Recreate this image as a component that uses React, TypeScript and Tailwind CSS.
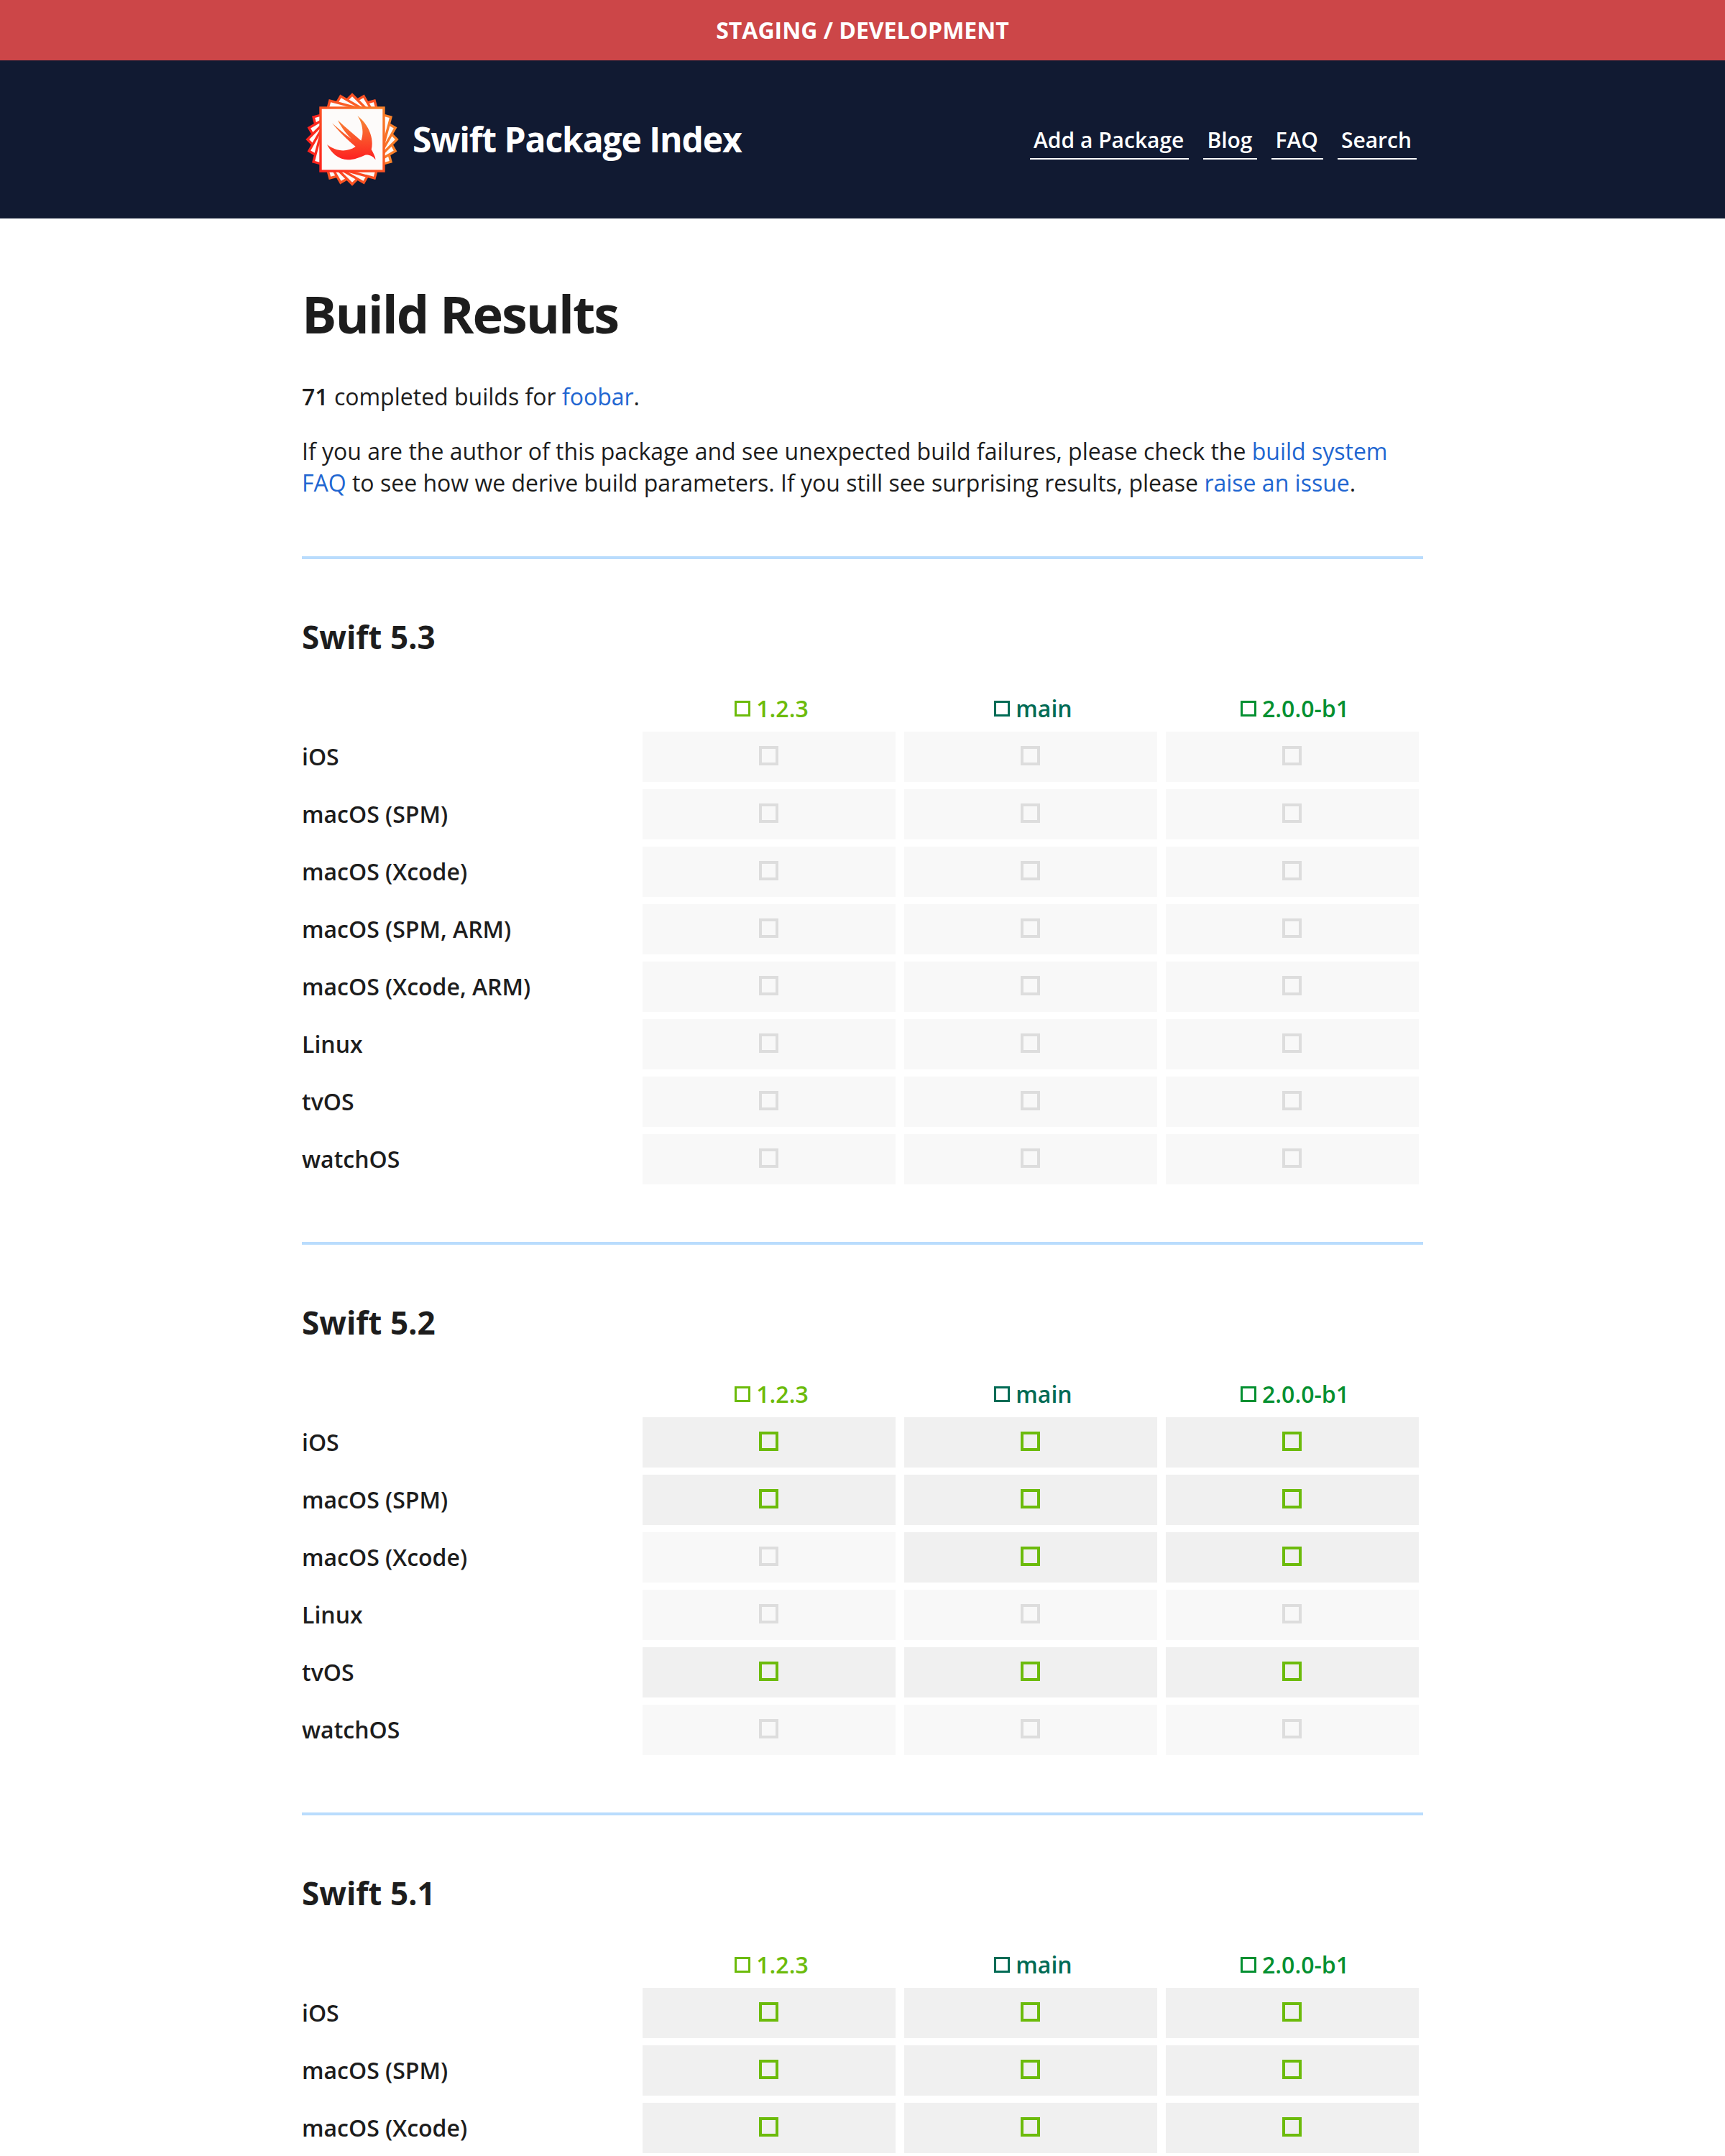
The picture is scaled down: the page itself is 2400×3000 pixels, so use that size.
const FONT = "font-['Open_Sans',sans-serif]"

type Col = { label: string; color: string }

const versions: Col[] = [
  { label: "1.2.3", color: "text-[#6cbb0b]" },
  { label: "main", color: "text-[#006b55]" },
  { label: "2.0.0-b1", color: "text-[#049031]" },
]

type Row = { name: string; on: boolean[] }

const off = [false, false, false]
const all = [true, true, true]

const sections: { title: string; rows: Row[] }[] = [
  {
    title: "Swift 5.3",
    rows: [
      { name: "iOS", on: off },
      { name: "macOS (SPM)", on: off },
      { name: "macOS (Xcode)", on: off },
      { name: "macOS (SPM, ARM)", on: off },
      { name: "macOS (Xcode, ARM)", on: off },
      { name: "Linux", on: off },
      { name: "tvOS", on: off },
      { name: "watchOS", on: off },
    ],
  },
  {
    title: "Swift 5.2",
    rows: [
      { name: "iOS", on: all },
      { name: "macOS (SPM)", on: all },
      { name: "macOS (Xcode)", on: [false, true, true] },
      { name: "Linux", on: off },
      { name: "tvOS", on: all },
      { name: "watchOS", on: off },
    ],
  },
  {
    title: "Swift 5.1",
    rows: [
      { name: "iOS", on: all },
      { name: "macOS (SPM)", on: all },
      { name: "macOS (Xcode)", on: all },
    ],
  },
]

function Logo() {
  const angles = [75, 60, 45, 30, 15, 0]
  return (
    <svg width="130" height="130" viewBox="0 0 130 130" className="ml-[5px] shrink-0">
      <defs>
        <linearGradient id="edge" gradientUnits="userSpaceOnUse" x1="120" y1="15" x2="15" y2="115">
          <stop offset="0" stopColor="#f88a2a" />
          <stop offset="1" stopColor="#fd1d1d" />
        </linearGradient>
        <linearGradient id="bird" x1="0.5" y1="0" x2="0.5" y2="1">
          <stop offset="0" stopColor="#f88a36" />
          <stop offset="1" stopColor="#fd2020" />
        </linearGradient>
      </defs>
      {angles.map((a) => (
        <rect
          key={a}
          x="21"
          y="21"
          width="88"
          height="88"
          fill="#fdfbfa"
          stroke="url(#edge)"
          strokeWidth="3.4"
          transform={`rotate(${a} 65 65)`}
        />
      ))}
      <g transform="translate(-4.3 -8.3) scale(0.3333)">
        <path
          fill="url(#bird)"
          d="M230 122C275 155 300 215 288 262C298 280 306 295 305 305C295 290 280 283 262 285C240 295 215 305 190 305C150 305 120 275 103 242C140 270 185 275 222 250C190 225 150 185 124 152C150 175 185 205 205 218C180 195 160 165 148 140C180 170 215 200 245 225C258 190 250 150 230 122Z"
        />
      </g>
    </svg>
  )
}

function Box({ on }: { on: boolean }) {
  return <span className={`block size-[27px] border-[4px] ${on ? "border-[#6cbb0b]" : "border-[#dddddd]"}`} />
}

function Section({ title, rows }: { title: string; rows: Row[] }) {
  return (
    <section className="border-t-[4px] border-[#b9dcfd] pt-[78px] pb-[80px]">
      <h3 className="text-[44px] leading-[60px] font-bold text-[#1d1d1d]">{title}</h3>
      <div className="mt-[48px] grid grid-cols-[462px_352px_352px_352px] gap-x-[12px] gap-y-[10px] pr-[6px]">
        <div />
        {versions.map((v) => (
          <div
            key={v.label}
            className={`flex h-[44px] items-center justify-center gap-[8px] pl-[7px] text-[32px] font-semibold ${v.color}`}
          >
            <span className="block size-[22px] border-[3px] border-current" />
            {v.label}
          </div>
        ))}
        {rows.map((r) => (
          <div key={r.name} className="contents">
            <div className="flex items-center text-[32px] font-semibold text-[#1d1d1d]">{r.name}</div>
            {r.on.map((on, i) => (
              <div key={i} className={`flex h-[70px] items-center justify-center pr-[2px] pb-[3px] ${on ? "bg-[#f0f0f0]" : "bg-[#f8f8f8]"}`}>
                <Box on={on} />
              </div>
            ))}
          </div>
        ))}
      </div>
    </section>
  )
}

export default function App() {
  return (
    <div className={`h-[3000px] overflow-hidden bg-white ${FONT}`}>
      <div className="flex h-[84px] items-center justify-center bg-[#cc4648] text-[32px] font-bold text-white">
        STAGING / DEVELOPMENT
      </div>
      <header className="h-[220px] bg-[#111a32]">
        <div className="mx-auto flex h-full w-[1560px] items-center justify-between pr-[9px]">
          <div className="flex items-center gap-[19px]">
            <Logo />
            <span className="text-[48px] font-bold tracking-[-1.1px] text-white">Swift Package Index</span>
          </div>
          <nav className="flex gap-[20px] text-[30px] leading-[40px] font-semibold text-white">
            <a className="border-b-2 border-white pt-[9px] pr-[7px] pb-[5px] pl-[5px]">Add a Package</a>
            <a className="border-b-2 border-white pt-[9px] pr-[7px] pb-[5px] pl-[5px]">Blog</a>
            <a className="border-b-2 border-white pt-[9px] pr-[7px] pb-[5px] pl-[5px]">FAQ</a>
            <a className="border-b-2 border-white pt-[9px] pr-[7px] pb-[5px] pl-[5px]">Search</a>
          </nav>
        </div>
      </header>
      <main className="mx-auto w-[1560px]">
        <h1 className="mt-[84px] text-[72px] leading-[96px] font-bold tracking-[-2px] text-[#1d1d1d]">Build Results</h1>
        <p className="mt-[46px] text-[32px] leading-[44px] text-[#1d1d1d]">
          <strong className="font-semibold">71</strong> completed builds for <a className="text-[#2166d1]">foobar</a>.
        </p>
        <p className="mt-[32px] mb-[80px] text-[32px] leading-[44px] text-[#1d1d1d]">
          If you are the author of this package and see unexpected build failures, please check the{" "}
          <a className="text-[#2166d1]">build system FAQ</a> to see how we derive build parameters. If you still see surprising results, please{" "}
          <a className="text-[#2166d1]">raise an issue</a>.
        </p>
        {sections.map((s) => (
          <Section key={s.title} title={s.title} rows={s.rows} />
        ))}
      </main>
    </div>
  )
}
